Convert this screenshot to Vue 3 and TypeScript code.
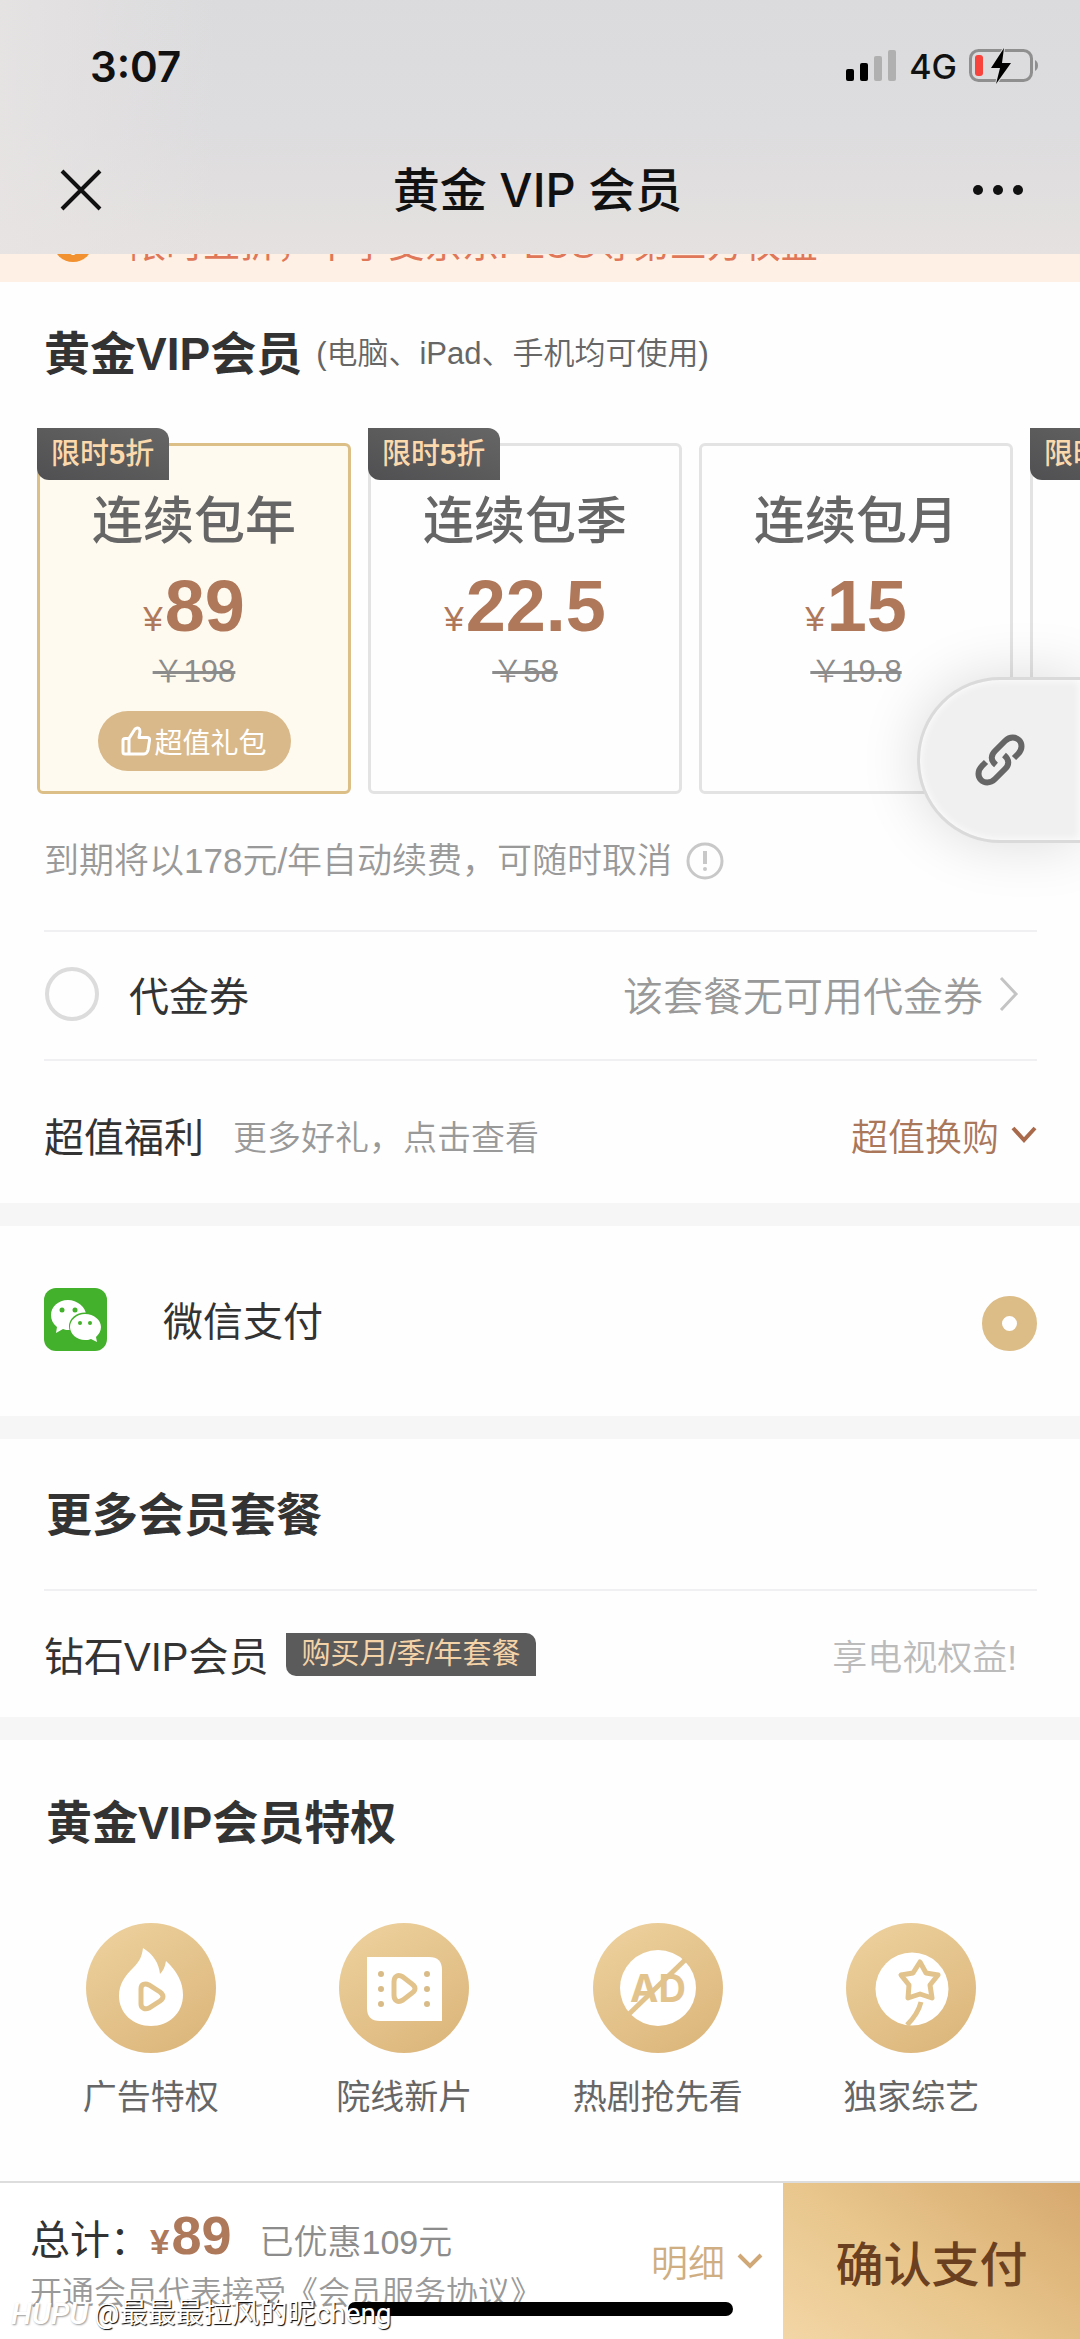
<script setup lang="ts">
import { ref } from 'vue'

interface Plan {
  id: string
  name: string
  price: string
  original: string
  discount?: number
  gift?: string
}

interface Privilege {
  icon: 'flame' | 'film' | 'noad' | 'star'
  label: string
}

const plans: Plan[] = [
  { id: 'year', name: '连续包年', price: '89', original: '198', discount: 5, gift: '超值礼包' },
  { id: 'quarter', name: '连续包季', price: '22.5', original: '58', discount: 5 },
  { id: 'month', name: '连续包月', price: '15', original: '19.8' },
  { id: 'more', name: '', price: '', original: '', discount: 5 },
]

const privileges: Privilege[] = [
  { icon: 'flame', label: '广告特权' },
  { icon: 'film', label: '院线新片' },
  { icon: 'noad', label: '热剧抢先看' },
  { icon: 'star', label: '独家综艺' },
]

const selectedPlan = ref('year')
const payment = ref('wechat')
const useVoucher = ref(false)
</script>

<template>
  <div class="page">
    <header class="top">
      <div class="status">
        <span class="time">3:07</span>
        <div class="status-right">
          <svg class="signal" viewBox="0 0 50 32" aria-hidden="true">
            <rect x="0" y="19" width="8" height="12" rx="2" fill="#000" />
            <rect x="14" y="13" width="8" height="18" rx="2" fill="#000" />
            <rect x="28" y="6" width="8" height="25" rx="2" fill="#b0b0b0" />
            <rect x="42" y="0" width="8" height="31" rx="2" fill="#b0b0b0" />
          </svg>
          <span class="network">4G</span>
          <svg class="battery" viewBox="0 0 70 36" aria-hidden="true">
            <rect x="1.5" y="2.5" width="61" height="30" rx="8" fill="none" stroke="#8f8f90" stroke-width="3" />
            <path d="M66 12c4 2 4 9 0 11z" fill="#8f8f90" />
            <rect x="6" y="7" width="8" height="21" rx="3" fill="#f8423c" />
            <path d="M35 0 22 20h9l-4 16 15-21h-9z" fill="#000" stroke="#dddddf" stroke-width="2" paint-order="stroke" />
          </svg>
        </div>
      </div>
      <div class="nav">
        <button class="nav-btn" type="button" aria-label="关闭">
          <svg width="44" height="44" viewBox="0 0 44 44"><path d="M3 3 41 41M41 3 3 41" stroke="#111" stroke-width="4" fill="none" /></svg>
        </button>
        <h1>黄金 VIP 会员</h1>
        <button class="nav-btn" type="button" aria-label="更多">
          <svg width="52" height="12" viewBox="0 0 52 12" fill="#111"><circle cx="6" cy="6" r="5" /><circle cx="26" cy="6" r="5" /><circle cx="46" cy="6" r="5" /></svg>
        </button>
      </div>
    </header>

    <main>
      <div class="notice">
        <svg width="40" height="40" viewBox="0 0 40 40" aria-hidden="true"><circle cx="20" cy="20" r="20" fill="#f29130" /><path d="M20 9v12" stroke="#fff" stroke-width="4" /><circle cx="20" cy="30" r="3" fill="#fff" /></svg>
        <span>限时五折，下享受京东PLUS等第三方权益</span>
      </div>

      <section class="plans">
        <h2 class="title">黄金VIP会员 <small>(电脑、iPad、手机均可使用)</small></h2>
        <div class="cards">
          <label v-for="p in plans" :key="p.id" class="card" :class="{ active: selectedPlan === p.id }">
            <input v-model="selectedPlan" class="hidden-radio" type="radio" name="plan" :value="p.id" />
            <span v-if="p.discount" class="badge">限时<b>{{ p.discount }}</b>折</span>
            <template v-if="p.name">
              <span class="name">{{ p.name }}</span>
              <span class="price"><i>¥</i>{{ p.price }}</span>
              <s class="original">￥{{ p.original }}</s>
            </template>
            <span v-if="p.gift" class="gift">
              <svg width="30" height="30" viewBox="0 0 30 30" fill="none" stroke="#fff" stroke-width="3" stroke-linejoin="round" aria-hidden="true"><path d="M8 12.500H4q-2 0-2 2V26q0 2 2 2h4zM8 12.500 14 3q5-3 5 3l-1 5.500h8q3 0 2.500 3L27 24q-1 4-4 4H8" /></svg>
              {{ p.gift }}
            </span>
          </label>
        </div>
        <p class="renew">
          到期将以178元/年自动续费，可随时取消
          <svg width="38" height="38" viewBox="0 0 38 38" fill="none" stroke="#c8c8c8" aria-hidden="true"><circle cx="19" cy="19" r="17" stroke-width="3" /><path d="M19 9v13" stroke-width="4" /><circle cx="19" cy="27" r="2" fill="#c8c8c8" stroke="none" /></svg>
        </p>
      </section>

      <section class="rows">
        <div class="row voucher">
          <input id="voucher" v-model="useVoucher" class="tick" type="checkbox" />
          <label for="voucher" class="main-text">代金券</label>
          <a href="#voucher" class="row-end none">
            该套餐无可用代金券
            <svg width="20" height="36" viewBox="0 0 20 36" fill="none" stroke="#c4c4c4" stroke-width="3" aria-hidden="true"><path d="M2 2 17 18 2 34" /></svg>
          </a>
        </div>
        <div class="row welfare">
          <span class="main-text">超值福利</span>
          <span class="sub">更多好礼，点击查看</span>
          <button type="button" class="row-end swap">
            超值换购
            <svg width="26" height="18" viewBox="0 0 26 18" fill="none" stroke="#a9694b" stroke-width="4" aria-hidden="true"><path d="M2 2 13 14 24 2" /></svg>
          </button>
        </div>
      </section>

      <section class="pay">
        <svg class="wechat" viewBox="0 0 63 63" aria-hidden="true">
          <rect width="63" height="63" rx="12" fill="#43b12b" />
          <path d="M24 12C14 12 7 19 7 27c0 5 2 9 6 12l-1 6 7-4c2 1 4 1 7 1 9 0 16-7 16-15S33 12 24 12z" fill="#fff" />
          <ellipse cx="41" cy="38.500" rx="16" ry="14" fill="#43b12b" />
          <path d="M41 26c-8 0-15 6-15 13s7 13 15 13c2 0 4 0 6-1l6 3-1-5c3-3 5-6 5-10 0-7-7-13-16-13z" fill="#fff" />
          <g fill="#43b12b"><circle cx="18" cy="22" r="2.500" /><circle cx="31" cy="22" r="2.500" /><circle cx="36" cy="35" r="2" /><circle cx="46" cy="35" r="2" /></g>
        </svg>
        <label for="wechat" class="main-text">微信支付</label>
        <input id="wechat" v-model="payment" class="pay-radio" type="radio" name="payment" value="wechat" />
      </section>

      <section class="more">
        <h2 class="title">更多会员套餐</h2>
        <div class="row diamond">
          <span class="main-text">钻石VIP会员</span>
          <span class="badge-inline">购买月/季/年套餐</span>
          <span class="row-end tv">享电视权益!</span>
        </div>
      </section>

      <section class="privileges">
        <h2 class="title">黄金VIP会员特权</h2>
        <ul>
          <li v-for="item in privileges" :key="item.icon">
            <svg width="130" height="130" viewBox="0 0 130 130" aria-hidden="true">
              <defs>
                <linearGradient :id="'gold-' + item.icon" x1="0.200" y1="0" x2="0.800" y2="1">
                  <stop offset="0" stop-color="#ecd09c" />
                  <stop offset="1" stop-color="#dcb67b" />
                </linearGradient>
              </defs>
              <circle cx="65" cy="65" r="65" :fill="`url(#gold-${item.icon})`" />
              <g v-if="item.icon === 'flame'">
                <path d="M57 25c10 6 16 15 17 26 3-3 5-7 6-13 11 10 17 21 17 34 0 18-14 31-32 31S33 90 33 73c0-12 6-20 14-28 7-7 9-12 10-20z" fill="#fff" />
                <path d="M55 66c0-5 4-6 8-4l11 7c4 3 4 6 0 9l-11 7c-4 2-8 0-8-4z" fill="none" stroke="#e3c38c" stroke-width="5" />
              </g>
              <g v-else-if="item.icon === 'film'">
                <path d="M28 34h62q13 0 13 13v51H41q-13 0-13-13z" fill="#fff" />
                <path d="M55 59c0-6 4-8 9-5l9 7c4 3 4 6 0 9l-9 7c-5 3-9 1-9-5z" fill="none" stroke="#e3c38c" stroke-width="5" />
                <g fill="#d9bb88"><circle cx="42" cy="51" r="3" /><circle cx="42" cy="66" r="3" /><circle cx="42" cy="81" r="3" /><circle cx="88" cy="51" r="3" /><circle cx="88" cy="66" r="3" /><circle cx="88" cy="81" r="3" /></g>
              </g>
              <g v-else-if="item.icon === 'noad'">
                <circle cx="65" cy="65" r="38" fill="#fff" />
                <path d="M36 91 92 37" stroke="#e3c38c" stroke-width="5" />
                <text x="65" y="79" text-anchor="middle" class="ad">AD</text>
              </g>
              <g v-else>
                <circle cx="66" cy="66" r="36.500" fill="#fff" />
                <path d="M74 39l6 11 12 2-8 10 2 13-12-4-12 4 1-13-8-10 12-2z" fill="none" stroke="#e3c38c" stroke-width="5" stroke-linejoin="round" />
                <path d="M75 79q-3 12-14 23" fill="none" stroke="#e3c38c" stroke-width="5" />
              </g>
            </svg>
            <span>{{ item.label }}</span>
          </li>
        </ul>
      </section>

      <button class="bubble" type="button" aria-label="链接">
        <svg width="52" height="52" viewBox="0 0 52 52" fill="none" stroke="#666" stroke-width="6" stroke-linecap="butt" aria-hidden="true">
          <path d="M22 31c-6-5-5-10-1-14l10-10c5-5 11-4 14-1s4 9-1 14l-4 4" />
          <path d="M30 21c6 5 5 10 1 14L21 45c-5 5-11 4-14 1s-4-9 1-14l4-4" />
        </svg>
      </button>
    </main>

    <footer>
      <div class="summary">
        <div class="bill">
          <p class="total">总计：<strong><i>¥</i>89</strong><span class="saved">已优惠109元</span></p>
          <p class="terms">开通会员代表接受<a href="#terms">《会员服务协议》</a></p>
        </div>
        <button type="button" class="detail">
          明细
          <svg width="26" height="16" viewBox="0 0 26 16" fill="none" stroke="#d0a878" stroke-width="4" aria-hidden="true"><path d="M2 2 13 13 24 2" /></svg>
        </button>
      </div>
      <button type="button" class="confirm">确认支付</button>
      <div class="home-bar"></div>
      <div class="watermark"><em>HUPU</em><span>@最最最拉风的昵cheng</span></div>
    </footer>
  </div>
</template>

<style>
body {
  margin: 0;
  background: #fff;
}
</style>

<style scoped>
.page {
  position: relative;
  display: flex;
  flex-direction: column;
  min-height: 100vh;
  overflow: hidden;
  color: #333;
  background: #fefefe;
  font-family: 'Liberation Sans', 'Noto Sans CJK SC', sans-serif;
  font-size: 40px;
}
* {
  box-sizing: border-box;
}
h1,
h2,
p,
ul {
  margin: 0;
  padding: 0;
}
i {
  font-style: normal;
  line-height: 1;
}
svg {
  flex: none;
}
button {
  padding: 0;
  border: 0;
  background: none;
  font: inherit;
  color: inherit;
}
a {
  color: inherit;
  text-decoration: none;
}
.top {
  position: relative;
  z-index: 2;
  height: 254px;
  color: #111;
  background: linear-gradient(90deg, rgba(232, 228, 228, 0.8), rgba(226, 224, 225, 0) 20%), linear-gradient(#dbdbdd 0%, #dddcde 50%, #e5e1e0 100%);
}
.status {
  display: flex;
  align-items: center;
  justify-content: space-between;
  height: 132px;
  padding: 0 41px 0 90px;
}
.time {
  font: 600 42px Inter, sans-serif;
}
.status-right {
  display: flex;
  align-items: center;
}
.signal {
  width: 50px;
  height: 32px;
}
.network {
  margin: 0 12px 0 13px;
  font: 500 34px Inter, sans-serif;
}
.battery {
  width: 70px;
  height: 36px;
}
.nav {
  display: flex;
  align-items: center;
  justify-content: space-between;
  height: 116px;
  padding: 0 56px 0 59px;
}
.nav-btn {
  display: flex;
}
.nav h1 {
  padding-bottom: 8px;
  font: 500 47px Inter, 'Noto Sans CJK SC', sans-serif;
}
main {
  position: relative;
  flex: 1;
  margin-top: -32px;
}
.notice {
  display: flex;
  align-items: center;
  gap: 36px;
  height: 60px;
  padding: 0 53px 20px;
  background: #fef0e4;
  color: #df7758;
  font-size: 37px;
  white-space: nowrap;
}
.title {
  font-size: 46px;
  line-height: 60px;
  font-weight: 700;
  white-space: nowrap;
}
.plans .title {
  display: flex;
  align-items: center;
  gap: 14px;
  padding: 42px 44px 0;
}
.title small {
  color: #666;
  font-size: 31px;
  font-weight: 350;
}
.cards {
  display: flex;
  gap: 17px;
  margin-top: 44px;
  padding: 15px 0 0 37px;
  overflow: hidden;
}
.card {
  position: relative;
  display: flex;
  flex: none;
  flex-direction: column;
  align-items: center;
  width: 314px;
  height: 351px;
  padding-top: 46px;
  border: 3px solid #e3e3e3;
  border-radius: 6px;
}
.card.active {
  border-color: #dcbf87;
  background: #fffaef;
}
.hidden-radio {
  position: absolute;
  opacity: 0;
}
.badge {
  position: absolute;
  top: -18px;
  left: -3px;
  padding: 0 15px 0 14px;
  border-radius: 0 12px;
  background: linear-gradient(20deg, #505052, #666);
  color: #fbd9ad;
  font-size: 29px;
  font-weight: 500;
  line-height: 52px;
  white-space: nowrap;
}
.name {
  color: #666;
  font-size: 51px;
  font-weight: 500;
  line-height: 60px;
}
.price {
  margin-top: 14px;
  color: #b0785a;
  font-size: 72px;
  font-weight: 700;
  line-height: 80px;
}
.price i {
  margin-right: 2px;
  font-size: 35px;
  font-weight: 400;
}
.original {
  margin-top: 6px;
  color: #8c8c8c;
  font-size: 31px;
  font-weight: 350;
  line-height: 40px;
}
.gift {
  display: flex;
  align-items: center;
  justify-content: center;
  gap: 3px;
  width: 193px;
  height: 60px;
  margin-top: 19px;
  border-radius: 30px;
  background: #d9b98a;
  color: #fff;
  font-size: 28px;
}
.renew {
  display: flex;
  align-items: center;
  gap: 14px;
  padding: 42px 44px 44px;
  color: #999;
  font-size: 35px;
  font-weight: 350;
  line-height: 50px;
}
.rows,
.more {
  padding: 0 43px 0 44px;
  border-bottom: 23px solid #f6f6f6;
}
.row {
  display: flex;
  align-items: center;
  border-top: 2px solid #f0f0f3;
}
.row-end {
  display: flex;
  align-items: center;
  margin-left: auto;
}
.main-text {
  font-size: 40px;
  font-weight: 400;
}
.voucher {
  height: 129px;
  padding-bottom: 4px;
}
.tick {
  appearance: none;
  width: 54px;
  height: 54px;
  margin: 0 30px 0 1px;
  border: 4px solid #dcdcdc;
  border-radius: 50%;
}
.none {
  gap: 16px;
  padding-right: 18px;
  color: #999;
  font-weight: 350;
}
.welfare {
  height: 144px;
  padding-top: 6px;
}
.sub {
  margin-left: 29px;
  color: #999;
  font-size: 34px;
  font-weight: 350;
}
.swap {
  gap: 12px;
  color: #aa775b;
  font-size: 37px;
  font-weight: 350;
}
.pay {
  display: flex;
  align-items: center;
  height: 213px;
  padding: 0 43px 4px 44px;
  border-bottom: 23px solid #f6f6f6;
}
.wechat {
  width: 63px;
  height: 63px;
  margin-right: 56px;
}
.pay-radio {
  appearance: none;
  width: 55px;
  height: 55px;
  margin: 8px 0 0 auto;
  border-radius: 50%;
  background: #fff;
  border: 20px solid #dcbc87;
}
.more .title {
  padding: 46px 2px 0;
  height: 150px;
}
.diamond {
  height: 128px;
}
.badge-inline {
  margin-left: 18px;
  padding: 0 15px;
  border-radius: 0 10px;
  background: #5b5b5b;
  color: #f5d3a8;
  font-size: 29px;
  line-height: 43px;
}
.tv {
  padding-right: 20px;
  color: #bbb;
  font-size: 35px;
  font-weight: 350;
}
.privileges {
  padding-top: 53px;
}
.privileges .title {
  padding: 0 46px;
}
.privileges ul {
  display: flex;
  margin-top: 70px;
  padding: 0 42px 0 24px;
  list-style: none;
}
.privileges li {
  display: flex;
  flex: 1;
  flex-direction: column;
  align-items: center;
  gap: 19px;
  color: #666;
  font-size: 34px;
  line-height: 50px;
}
.ad {
  fill: #e3c38c;
  font: 700 38px Inter, sans-serif;
}
.bubble {
  position: absolute;
  top: 455px;
  right: -3px;
  display: flex;
  align-items: center;
  width: 166px;
  height: 166px;
  padding-left: 54px;
  border: 3px solid #dadada;
  border-radius: 83px 0 0 83px;
  background: #f0f0f0;
  box-shadow: 0 0 60px rgba(0, 0, 0, 0.14), inset 0 0 8px #fff;
}
footer {
  position: relative;
  display: flex;
  height: 158px;
  border-top: 2px solid #ddd;
  background: #fff;
}
.summary {
  display: flex;
  flex: 1;
  padding: 32px 20px 0 30px;
}
.bill {
  white-space: nowrap;
}
.total {
  font-size: 40px;
  line-height: 50px;
}
.total strong {
  color: #ae785b;
  font-size: 54px;
  line-height: 1px;
}
.total strong i {
  margin-right: 2px;
  font-size: 35px;
}
.saved {
  margin-left: 28px;
  color: #8c8c8c;
  font-size: 34px;
  font-weight: 350;
}
.terms {
  margin-top: 6px;
  color: #999;
  font-size: 32px;
  font-weight: 350;
  line-height: 40px;
}
.detail {
  display: flex;
  align-items: center;
  gap: 12px;
  height: 92px;
  margin-left: auto;
  color: #cfae83;
  font-size: 37px;
  font-weight: 350;
}
.confirm {
  width: 297px;
  background: linear-gradient(35deg, #f3d6a6 0%, #e8c68c 45%, #d6a86e 100%);
  color: #6b4020;
  font-size: 48px;
  font-weight: 500;
}
.home-bar {
  position: absolute;
  bottom: 23px;
  left: 50%;
  width: 385px;
  height: 14px;
  margin-left: -192px;
  border-radius: 7px;
  background: #000;
}
.watermark {
  position: absolute;
  bottom: 7px;
  left: 11px;
  display: flex;
  align-items: center;
  gap: 6px;
  color: #fff;
  font: 400 28px/36px Roboto, 'Noto Sans CJK SC', sans-serif;
  text-shadow: 1px 1px 1px #000;
  white-space: nowrap;
}
.watermark em {
  font-size: 30px;
  font-weight: 500;
  text-shadow: 1px 1px 2px #999;
}
</style>
